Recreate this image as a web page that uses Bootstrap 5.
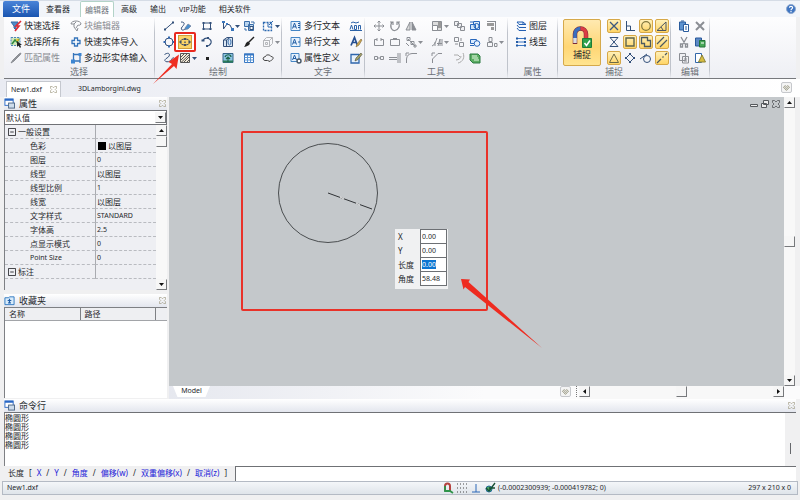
<!DOCTYPE html>
<html lang="zh-CN">
<head>
<meta charset="utf-8">
<meta name="viewport" content="width=device-width, initial-scale=1">
<title>New1.dxf</title>
<link href="https://cdn.jsdelivr.net/npm/bootstrap@5.3.0/dist/css/bootstrap.min.css" rel="stylesheet">
<style>
:root{--ink:#26282c;--mute:#8b8e94}
body{font:8px/12px "Noto Sans","Noto Sans CJK SC",sans-serif;color:var(--ink);background:#f0f0f1;overflow-x:hidden}
button,select,input{font:inherit;color:inherit;border:0;background:none;padding:0;margin:0;border-radius:0}
a{color:inherit;text-decoration:none}
svg{display:block;flex:none;fill:none;stroke:currentColor;stroke-width:1;overflow:visible}
.ic{width:12px;height:12px}
.lat{font-size:7px}
/* menu */
.menu{height:17px;background:#f2f5fa;border-top:1px solid #d5dce6;padding-left:3px}
.menu a{line-height:16px;height:16px}
.menu .file-tab{background:linear-gradient(#4a84d8,#1a55b0);color:#fff;width:36px;text-align:center;border-radius:2px 2px 0 0;font-size:9px}
.menu .view-tab{margin:0 10px 0 7px}
.menu .on-tab{width:34px;text-align:center;background:#fff;color:#70757c;border:1px solid #b3d3c8;border-bottom:0;border-radius:2px 2px 0 0;line-height:15px}
.menu-list{gap:13px;margin-left:7px}
/* ribbon */
.ribbon{background:linear-gradient(#fdfdfe,#eeeff4);border-bottom:1px solid #77797d;margin:0 4px;padding-top:1px;font-size:9px}
.grp{position:relative;border-right:1px solid;border-image:linear-gradient(transparent,#bfc3cb 25%,#bfc3cb 85%,transparent) 1}
.grp-name{text-align:center;color:#6c7077;line-height:12px}
.tools{display:grid;grid-auto-rows:16px;align-items:center;padding-left:6px}
.tools button{display:flex;align-items:center;height:14px;white-space:nowrap;line-height:14px;color:var(--ink)}
.tools .lbl{gap:2px}
.tools .sq{min-width:16px;padding-left:2px;color:#33507a}
.tools button:disabled{color:var(--mute)}
.tools .caret{width:5px;height:3px;margin-left:1px;fill:currentColor;stroke:none}
.tools .hot{width:14px;min-width:14px;margin-left:1px;padding:0;border:1px solid #d6a848;border-radius:2px;background:linear-gradient(#fff0b8,#ffd567)}
.tools .mark-box{width:22px;height:20px;margin-left:-3px;border:2px solid #e8291f;border-radius:2px;padding:1px 2px;background:#fff;position:relative}
.mark-box span{display:flex;align-items:center;justify-content:center;width:100%;height:14px;background:#fbd468;border:1px solid #cf9d39}
.g-pick{width:151px}.g-pick .tools{grid-template-columns:60px 84px}
.g-draw{width:127px}.g-draw .tools{grid-template-columns:16px 22px 21px 21px 19px 20px}
.g-text{width:83px}.g-text .tools{grid-template-columns:58px 16px;padding-left:8px}
.g-tool{width:143px}.g-tool .tools{grid-template-columns:16px 16px 26px 22px 16px 17px 24px}
.g-prop{width:50px}.g-prop .tools{padding-left:7px}
.g-snap{width:113px}.g-snap .tools{grid-template-columns:repeat(4,16px);padding-left:5px}
.g-edit{width:39px}.g-edit .tools{grid-template-columns:16px 16px;padding-left:5px}
.snap-btn{width:40px;height:47px;margin:1px 0 0 5px;border:1px solid #d5a94b;border-radius:2px;background:linear-gradient(#ffe9b0,#ffd675 60%,#ffe490);text-align:center}
.arrow-1{position:absolute;left:-2px;top:33px;width:28px;height:34px;z-index:3;pointer-events:none}
/* document tabs */
.docs{height:18px;background:linear-gradient(90deg,#e9ebf2,#f4f5f9 45%,#fff);padding-left:6px;padding-right:8px;font-size:7px}
.docs .doc-on{background:#fff;border:1px solid #c5c8cf;border-bottom:0;height:16px;width:55px;padding:0 3px 0 4px;line-height:15px}
.docs .doc{margin-left:17px;line-height:16px}
.close-x{width:7px;height:7px;color:#a09c84}
.drop{width:11px;height:11px;border:1px solid #c6c8cc;border-radius:2px;background:#f4f4f4;color:#8b8a70}
.drop svg{width:7px;height:6px}
/* side panels */
.side{width:163px;margin-left:4px}
.ttl{height:13px;background:linear-gradient(#fff,#e3e6ee);padding:0 1px 0 0;font-size:9px;line-height:13px}
.ttl svg:first-child{width:11px;height:11px;margin-right:4px}
.pick-set{height:15px;border:1px solid #707276;background:#fff}
.pick-set select{appearance:none;width:100%;line-height:13px;padding-left:1px;display:block;height:13px;outline:0}
.pick-set .sb{position:absolute;right:0;top:1px;pointer-events:none}
.sb{width:11px;height:11px;flex:none;background:#f6f6f6;border:1px solid #f6f6f6;border-right-color:#77797c;border-bottom-color:#77797c;display:flex;align-items:center;justify-content:center}
.sb svg{width:5px;height:3px;fill:#111;stroke:none}
.sb.side-way svg{width:3px;height:5px}
.track{background:#f8f8f8}
.props{height:165px;border-left:1px solid #7e8084;background:#eeeff3;overflow:hidden}
.props table{width:100%;height:154px;table-layout:fixed;border-collapse:separate;border-spacing:0}
.props td,.props th{height:14px;line-height:13px;padding:0 0 0 25px;border-bottom:1px dashed #b9bbc0;font-weight:400;text-align:left;white-space:nowrap}
.props td{border-left:1px solid #a9abb0;padding-left:1px;width:61px}
.props .sec{padding-left:3px}
.props .sec svg{width:8px;height:8px;display:inline-block;vertical-align:-1px;margin-right:2px}
.swatch{display:inline-block;width:8px;height:8px;background:#000;margin:0 2px -1px 1px}
.fav{border-left:1px solid #7e8084;border-top:1px solid #7e8084;background:#fff;margin-bottom:1px}
.fav table{width:100%;table-layout:fixed}
.fav th{height:12px;line-height:11px;padding:0 4px;font-weight:400;background:#eeeff2;border-right:1px solid #7e8084;border-bottom:1px solid #a2a4a8}
.fav th:last-child{border-right:0;width:12px}
/* drawing area */
.work{margin-left:2px}
.canvas-row{padding-right:5px}
.canvas{background:#c4c8cb}
.canvas>svg{position:absolute;left:0;top:0}
.wins{position:absolute;right:4px;top:3px;gap:3px;color:#55585c}
.wins svg{width:8px;height:8px}
.dyn{position:absolute;left:226px;top:132px;background:#f0f1f2;width:53px;height:60px}
.dyn div{height:14px}
.dyn label{width:25px;padding-left:3px;line-height:15px}
.dyn input{width:27px;height:15px;border:1px solid #6d7074;background:#fff;padding:0 1px;outline:0}
.dyn input::selection{background:#0c75d1;color:#fff}
.foot{height:13px;background:linear-gradient(90deg,#e6e8ef,#fbfbfc 50%)}
.model{width:37px;height:11px;line-height:10px;margin-left:4px;text-align:center;background:#fff;clip-path:polygon(0 0,100% 0,88% 100%,12% 100%)}
.grip{width:3px;height:11px;border-left:1px dotted #777;margin-left:5px}
.hbar{width:205px}
/* command line */
.cmd{margin:0 4px}
.log{height:54px;border-top:1px solid #6f7175;border-left:1px solid #7e8084;background:#fff;padding-top:1px;line-height:9px;font-family:"Liberation Sans","Noto Sans CJK SC",sans-serif}
.log-bar{width:11px;background:#f0f0f1;margin-top:-1px}
.log-bar i{display:block;width:1px;height:11px;margin:30px 0 0 5px;background:#66686c}
.prompt{height:15px;gap:5px;padding-left:4px;line-height:14px;white-space:pre}
.prompt a{color:#2220d8}
.prompt input{border:1px solid #6f7175;border-right:0;border-bottom:0;background:#fff;height:15px;min-width:0;margin-left:3px;outline:0}
.status{height:14px;margin:0 2px 5px 2px;border:1px solid #b4bac4;background:linear-gradient(#f4f6f9,#dfe4ea);line-height:12px;padding:0 6px 0 4px;font-size:7px}
.status .coords{margin-left:404px;gap:1px}
.status .coords svg{margin-right:1px}
</style>
<script src="https://cdn.jsdelivr.net/npm/bootstrap@5.3.0/dist/js/bootstrap.bundle.min.js"></script>
</head>
<body class="d-flex flex-column min-vh-100">
<svg class="d-none" aria-hidden="true">
  <symbol id="dn" viewBox="0 0 5 3"><path d="M0 0h5L2.500 3z"/></symbol>
  <symbol id="up" viewBox="0 0 5 3"><path d="M0 3h5L2.500 0z"/></symbol>
  <symbol id="lf" viewBox="0 0 3 5"><path d="M3 0v5L0 2.500z"/></symbol>
  <symbol id="rt" viewBox="0 0 3 5"><path d="M0 0v5L3 2.500z"/></symbol>
  <symbol id="cx" viewBox="0 0 8 8"><path d="M.5.5h2L4 2 5.500.5h2v2L6 4l1.500 1.500v2h-2L4 6 2.500 7.500h-2v-2L2 4 .5 2.500z" stroke-width=".8"/></symbol>
  <symbol id="win" viewBox="0 0 12 12"><rect x="1" y="1" width="9" height="7" fill="#fff" stroke="#2867c5"/><path d="M1 2h9" stroke="#2867c5" stroke-width="2"/><rect x="5" y="5.500" width="6.500" height="5.500" fill="#cddcec" stroke="#4b6582"/></symbol>
  <symbol id="heart" viewBox="0 0 8 7"><path d="M.5 2.500 2.500.8 4 2 5.500.8l2 1.700L4 6.300z"/><path d="M2.500 2.800 4 4l1.500-1.200"/></symbol>
  <symbol id="minus" viewBox="0 0 9 9"><path d="M.5.5h8v8h-8zM2.500 4.500h4"/></symbol>
</svg>

<nav class="menu d-flex" aria-label="菜单">
  <a class="file-tab" href="#">文件</a>
  <a class="view-tab" href="#">查看器</a>
  <a class="on-tab" href="#">编辑器</a>
  <div class="menu-list d-flex"><a href="#">高级</a><a href="#">输出</a><a href="#"><span class="lat">VIP</span>功能</a><a href="#">相关软件</a></div>
  <button class="ms-auto me-1 d-flex align-items-center" aria-label="帮助"><svg width="10" height="10" viewBox="0 0 10 10"><circle cx="5" cy="5" r="4.500" fill="#3f75c2" stroke="#8fa9cf"/><path d="M3.400 3.800c.1-2 3.300-1.800 3.200 0C6.500 5 5 4.800 5 6.200M5 7v1.200" stroke="#fff" stroke-width="1.200"/></svg></button>
</nav>

<div class="ribbon d-flex">
  <section class="grp g-pick">
    <div class="tools">
      <button class="lbl"><svg class="ic" viewBox="0 0 12 12"><path d="M1 2h7L6 6v4L4 8V6z" fill="#4e8cc8" stroke="#346aa4"/><path d="M11 1 6 6h3l-4 5" stroke="#dd2b35" stroke-width="1.600"/></svg>快速选择</button>
      <button class="lbl" disabled><svg class="ic" viewBox="0 0 12 12"><path d="M1 4c0-4 10-4 10 0-1 2-3 1-3 1L6 8M1 4h3l2-2M4 4v3l3 4 1-3"/></svg>块编辑器</button>
      <button class="lbl"><svg class="ic" viewBox="0 0 12 12"><rect x="1" y="1.500" width="9" height="8" fill="#cfe6b8" stroke="#4c83b9" stroke-dasharray="2 1"/><path d="M2 8l3-4 2 2 2-3" stroke="#2f8a3e" stroke-width="1.500"/><path d="M7 5v6l1.500-1.500L10 12l1-1-1-2h2z" fill="#222" stroke="none"/><circle cx="7.500" cy="4" r="1.300" fill="#e6b92c" stroke="none"/></svg>选择所有</button>
      <button class="lbl"><svg class="ic" viewBox="0 0 12 12"><path d="M4.500 2h3v2.500H10v3H7.500V10h-3V7.500H2v-3h2.500z" stroke="#3474bb" stroke-width="1.300" fill="#fff"/></svg>快速实体导入</button>
      <button class="lbl" disabled><svg class="ic" viewBox="0 0 12 12"><path d="M1 11l2-3 6-6 2-1-1 2-6 6z" fill="#92959a"/></svg>匹配属性</button>
      <button class="lbl"><svg class="ic" viewBox="0 0 12 12"><path d="M3.500 1v9M1 9h9M3 2.500h7.500M10 1v10" stroke="#3474bb" stroke-width="1.300"/><path d="M1 7.500h4v4H1zM8.500 1h3v3h-3z" fill="#3d86d2" stroke="none"/></svg>多边形实体输入</button>
    </div>
    <div class="grp-name">选择</div>
  </section>

  <section class="grp g-draw">
    <div class="tools">
      <button class="sq" aria-label="直线"><svg class="ic" viewBox="0 0 12 12"><path d="m2 9.500 8-7"/><path d="M1 8.500h2v2H1zM9 1.500h2v2H9z" fill="#33507a" stroke="none"/></svg></button>
      <button class="sq" aria-label="手绘"><svg class="ic" viewBox="0 0 12 12"><path d="M2 2c5 0 3 3 1 5-2 3 1 4 3 2" stroke="#34507a"/><path d="m6 8 3-4 3 2-3 3-3 .5z" fill="#4a90d0" stroke="#6e7e99" stroke-width=".7"/></svg></button>
      <button class="sq" aria-label="矩形"><svg class="ic" viewBox="0 0 12 12"><path d="M2.500 3h7v6h-7z"/><path d="M1.500 2h2v2h-2zM8.500 2h2v2h-2zM1.500 8h2v2h-2zM8.500 8h2v2h-2z" fill="#33507a" stroke="none"/></svg></button>
      <button class="sq" aria-label="折线"><svg class="ic" viewBox="0 0 12 12"><path d="M1.500 2v7L5 4l3 1 2 4"/><path d="M0 1h3v2H0zM4 3h2v2H4zM9 8h3v3H9z" fill="#3975bb" stroke="none"/></svg><svg class="caret"><use href="#dn"/></svg></button>
      <button class="sq" aria-label="插入块"><svg class="ic" viewBox="0 0 12 12"><path d="M1.500 1.500h5v5h-5zM5.500 4.500h5v6h-5z" fill="#b9d4ee" stroke="#3b6ea9"/><path d="M8 2h3v2M2 8v2h2" stroke="#3b6ea9"/><path d="M7 6.500h3v3H7z" fill="#fff"/></svg></button>
      <button class="sq" aria-label="区域"><svg class="ic" viewBox="0 0 12 12"><path d="M1.500 2.500h8v8h-8z" stroke="#2c69b0" stroke-width="1.300" stroke-dasharray="2 1"/><path d="m11 1-4 4M6 3v4h4" stroke="#2c69b0"/></svg><svg class="caret"><use href="#dn"/></svg></button>

      <button class="sq" aria-label="圆"><svg class="ic" viewBox="0 0 12 12"><circle cx="6" cy="6" r="4"/><path d="M5 .5h2v2H5zM5 9.500h2v2H5zM.5 5h2v2h-2zM9.500 5h2v2h-2z" fill="#2f65ae" stroke="none"/></svg></button>
      <button class="mark-box" aria-label="椭圆形"><span><svg width="12" height="10" viewBox="0 0 12 10"><ellipse cx="6" cy="5" rx="4.500" ry="3" stroke="#445063"/><path d="M5 1h2v2H5zM5 7h2v2H5zM.5 4h2v2h-2zM9.500 4h2v2h-2zM5.300 4.500h1.400v1.400H5.300z" fill="#445063" stroke="none"/></svg></span></button>
      <button class="sq" aria-label="圆弧"><svg class="ic" viewBox="0 0 12 12"><path d="M2 4c3-4 9-1 8 3-1 2-2 3-4 3" stroke-width="1.200"/><path d="M.5 3.500h3v2h-3zM5 9h2v2H5zM6 1h2v2H6z" fill="#33507a" stroke="none"/></svg></button>
      <button class="sq" aria-label="圆柱"><svg class="ic" viewBox="0 0 12 12"><path d="M1.500 4 5 1.500h5.500v9H1.500z" fill="#dbe7f3"/><path d="M4.500 4v6.500M1.500 4h3L7 2"/><ellipse cx="7.500" cy="6" rx="1.500" ry="3" stroke="#3970ae"/></svg></button>
      <button class="sq" aria-label="画笔"><svg class="ic" viewBox="0 0 12 12"><path d="m11 1-6 6" stroke="#222" stroke-width="1.500"/><path d="M5 5.500 7 7.500C6 10 4 10 1 11c2-2 1-4 4-5.500z" fill="#222" stroke="none"/></svg></button>
      <button class="sq" disabled aria-label="三维"><svg class="ic" viewBox="0 0 12 12"><path d="M1.500 4.500h6v6h-6zM1.500 4.500l3-3h6v6l-3 3M7.500 4.500l3-3M3.500 6.500h2v2h-2z" stroke="#b4b6ba"/></svg><svg class="caret"><use href="#dn"/></svg></button>

      <button class="sq" aria-label="样条"><svg class="ic" viewBox="0 0 12 12"><path d="M1.500 2.500C7-1 8 4 4 6c-5 3 0 5 3 3 2-1 2-4 4-3"/></svg></button>
      <button class="sq" aria-label="填充"><svg class="ic" viewBox="0 0 12 12"><path d="M1.500 1.500h9v9h-9z" fill="#f3ead8" stroke="#555"/><path d="m2 5 3-3M2 8l6-6M2 10.500 10 3M5 10l5-5M8 10l2-2" stroke="#444" stroke-width=".9"/></svg><svg class="caret"><use href="#dn"/></svg></button>
      <button class="sq" aria-label="点"><svg class="ic" viewBox="0 0 12 12"><path d="M5 5h3v3H5z" fill="#222" stroke="none"/></svg></button>
      <button class="sq" aria-label="图像"><svg class="ic" viewBox="0 0 12 12"><path d="M1 1.500h10v9H1z" fill="#8ec4e4" stroke="#356488"/><path d="M1 8.500h10v2H1z" fill="#2b7c59" stroke="none"/><path d="M6 10V5M3 5c1-3 6-3 6 0M4 7l2-2 2 2" stroke="#1d664b" stroke-width="1.200"/></svg></button>
      <button class="sq" aria-label="表格"><svg class="ic" viewBox="0 0 12 12"><path d="M1.500 2h9v8.500h-9z" fill="#fff" stroke="#3777c3"/><path d="M1 2.500h10" stroke="#3777c3" stroke-width="2"/><path d="M1.500 5.500h9M1.500 8h9M4.500 3v7.500M7.500 3v7.500" stroke="#5d97d5"/></svg></button>
      <button class="sq" aria-label="云线"><svg class="ic" viewBox="0 0 12 12"><path d="M3 8.500C0 8 1 4.500 3 5c1-3 5-2.500 6-.5 3 0 2.500 3 .5 3.500L8 9.500 5.500 8.500z" stroke="#444"/></svg></button>
    </div>
    <div class="grp-name">绘制</div>
    <svg class="arrow-1" viewBox="0 0 28 34"><path d="M0 33 19 13 15.500 11 26 3.500 23.500 18 21 15z" fill="#ee2e22" stroke="none"/></svg>
  </section>

  <section class="grp g-text">
    <div class="tools">
      <button class="lbl"><svg class="ic" viewBox="0 0 12 12"><path d="M1 1.500h9v9H1z" fill="#e8f2fc" stroke="#4586c5"/><path d="m2.500 8.500 2-5.500 2 5.500M3 6.800h3M8 3.500h2M8 5.500h2M8 7.500h2" stroke="#235ea5"/></svg>多行文本</button>
      <button class="sq" aria-label="查找文本"><svg class="ic" viewBox="0 0 12 12"><path d="M0 9.500 1.500 5 3 9.500M4.500 9.500v-4h2v4zM8.500 9.500v-4h2v4M0 10.500h12M1 3l2-1 3 1 3-1" stroke="#2b62a8"/></svg></button>
      <button class="lbl"><svg class="ic" viewBox="0 0 12 12"><path d="M1 1.500h9v9H1z" fill="#e8f2fc" stroke="#4586c5"/><path d="m2.500 8.500 2-5.500 2 5.500M3 6.800h3M8 6h2" stroke="#235ea5"/></svg>单行文本</button>
      <button class="sq" aria-label="文本样式"><svg class="ic" viewBox="0 0 12 12"><path d="m1 9.500 3.500-8 3 8M2.500 6.500h4" stroke="#264f91" stroke-width="1.700"/><path d="m11 3-4 5-1 3 3-2 3-5z" fill="#d0a84e" stroke="#7c663a" stroke-width=".6"/></svg></button>
      <button class="lbl"><svg class="ic" viewBox="0 0 12 12"><path d="M1 1.500h8v8H1z" fill="#e8f2fc" stroke="#4586c5"/><path d="m2.500 8 2-5 2 5M3 6.500h3" stroke="#235ea5"/><circle cx="9" cy="9" r="2" fill="#fff" stroke="#456" stroke-width="1.400"/></svg>属性定义</button>
      <button class="sq" aria-label="编辑属性"><svg class="ic" viewBox="0 0 12 12"><path d="M1 2.500h8v8.500H1z" fill="#e8f2fc" stroke="#2f66ac" stroke-width="1.300"/><path d="m11 1-5 5-1 3 3-1.500 4-5z" fill="#a3a06a" stroke="#4d4b32" stroke-width=".6"/></svg></button>
    </div>
    <div class="grp-name">文字</div>
  </section>

  <section class="grp g-tool">
    <div class="tools">
      <button class="sq" disabled aria-label="移动"><svg class="ic" viewBox="0 0 12 12"><path d="M6 1v10M1 6h10M4.500 2.500 6 1l1.500 1.500M4.500 9.500 6 11l1.500-1.500M2.500 4.500 1 6l1.500 1.500M9.500 4.500 11 6 9.500 7.500"/></svg></button>
      <button class="sq" disabled aria-label="旋转"><svg class="ic" viewBox="0 0 12 12"><path d="M3 2C0 7 3 11 6 10.500S12 6 9 2M1 2h3v3M11 2H8v3" stroke-width="1.200"/></svg></button>
      <button class="sq" disabled aria-label="镜像"><svg class="ic" viewBox="0 0 12 12"><path d="M5 2v8H1z" fill="#ddd"/><path d="M7 2v8h4z" fill="#8b8e94"/></svg></button>
      <button class="sq" disabled aria-label="缩放"><svg class="ic" viewBox="0 0 12 12"><path d="M1.500 1.500h9v9h-9z" fill="#ddd"/><path d="M1.500 5.500h5v5h-5z" fill="#fff"/><path d="M7 2h3v6H7z" fill="#999" stroke="none"/></svg><svg class="caret"><use href="#dn"/></svg></button>
      <button class="sq" disabled aria-label="复制"><svg class="ic" viewBox="0 0 12 12"><path d="M1.500 1.500h4v4h-4zM4.500 3.500h4v4h-4zM7.500 6.500h4v4h-4z" fill="#f0f0f3"/></svg></button>
      <button class="sq" aria-label="组合"><svg class="ic" viewBox="0 0 12 12"><path d="M4.500 1.500h6v8h-6z" fill="#e0edf9" stroke="#2867bb"/><path d="M1.500 4.500h5v5h-5z" fill="#d0e4f8" stroke="#2867bb"/><circle cx="7.500" cy="6" r="2.500" stroke="#2867bb"/><path d="M1 2h3" stroke="#2867bb"/></svg></button>
      <button class="sq" disabled aria-label="对齐"><svg class="ic" viewBox="0 0 12 12"><path d="M1 1.500h9M9.500 1v10"/><path d="M1 3h7v3H1zM5 7h3v3H5z" fill="#999" stroke="none"/></svg></button>

      <button class="sq" disabled aria-label="打断"><svg class="ic" viewBox="0 0 12 12"><path d="M4 3.500H1.500v6h9v-6H8M4 2v3M8 2v3"/></svg></button>
      <button class="sq" disabled aria-label="闭合"><svg class="ic" viewBox="0 0 12 12"><path d="M1.500 3.500v6h9v-6zM4 2.500h4"/></svg></button>
      <button class="sq" disabled aria-label="节点"><svg class="ic" viewBox="0 0 12 12"><path d="m3 3 7 7M2 1.500h3v3H2zM6 5.500h3v3H6zM9 9h2v2H9zM1 7l3 3"/></svg><svg class="caret"><use href="#dn"/></svg></button>
      <button class="sq" disabled aria-label="标注"><svg class="ic" viewBox="0 0 12 12"><path d="M1 10c3-1 4-5 5-8M4 10V6M7 10l2-7v7M6 7.500h5M11 3v7"/></svg><svg class="caret"><use href="#dn"/></svg></button>
      <button class="sq" disabled aria-label="阵列"><svg class="ic" viewBox="0 0 12 12"><path d="M1.500 1.500h4v4h-4zM6.500 6.500h4v4h-4zM8 2v3M2 8h3"/></svg></button>
      <button class="sq" aria-label="分解"><svg class="ic" viewBox="0 0 12 12"><path d="M1.500 3.500h6v4h-6z" fill="#d9eaff" stroke="#2867bb"/><circle cx="8" cy="7.500" r="2.800" fill="#e9f3ff" stroke="#2867bb"/><path d="M1 9.500h4" stroke="#2867bb"/></svg></button>
      <button class="sq" disabled aria-label="顺序"><svg class="ic" viewBox="0 0 12 12"><path d="M3 1.500h3v4H3zM1.500 10.500v-4h5v4zM8.500 7.500h2.500v3H8.500z"/></svg><svg class="caret"><use href="#dn"/></svg></button>

      <button class="sq" disabled aria-label="合并"><svg class="ic" viewBox="0 0 12 12"><path d="M1.500 4.500h3v3h-3zM7.500 4.500h3v3h-3zM4.500 6h3"/></svg></button>
      <button class="sq" disabled aria-label="延伸"><svg class="ic" viewBox="0 0 12 12"><path d="M0 5.500h8M0 7.500h8M9 1v10M11 1v10"/></svg></button>
      <button class="sq" disabled aria-label="圆角"><svg class="ic" viewBox="0 0 12 12"><path d="M1.500 11V7Q2 2 7 1.500h5M1 4V1h3"/></svg></button>
      <button class="sq" disabled aria-label="倒角"><svg class="ic" viewBox="0 0 12 12"><path d="M1.500 11V7L7 1.500h4M1 4V1h3"/></svg></button>
      <button class="sq" disabled aria-label="偏移"><svg class="ic" viewBox="0 0 12 12"><path d="M1 3h4l2 2M10 1c2 4 0 9-5 10M8 4c0 2-2 4-5 4" stroke="#aaa"/></svg></button>
      <button class="sq" aria-label="图层组"><svg class="ic" viewBox="0 0 12 12"><path d="M1 2h8l2 2v7H4L1 8z" fill="#5cae63" stroke="#2c7b43"/><path d="M3 4h5M3 6h6M5 8h5" stroke="#e4f8e4"/></svg></button>
    </div>
    <div class="grp-name">工具</div>
  </section>

  <section class="grp g-prop">
    <div class="tools">
      <button class="lbl"><svg class="ic" viewBox="0 0 12 12"><path d="M2 2h6l3 2.500H4zM2 5l2 2.500h7M2 8l2 2.500h7M8 2v2" fill="#e9f2fb" stroke="#245fb1"/></svg>图层</button>
      <button class="lbl"><svg class="ic" viewBox="0 0 12 12"><path d="M1 2.500h10M1 6h10M1 9.500h10" stroke="#3c77c4"/><path d="M1 1.500h2v2H1zM9 1.500h2v2H9zM1 5h2v2H1zM9 5h2v2H9zM1 8.500h2v2H1zM9 8.500h2v2H9z" fill="#235aa5" stroke="none"/></svg>线型</button>
      <span></span>
    </div>
    <div class="grp-name">属性</div>
  </section>

  <section class="grp g-snap">
    <div class="d-flex">
      <button class="snap-btn"><svg class="mx-auto" width="22" height="24" viewBox="0 0 22 24"><path d="M4 19V9a5.500 5.500 0 0 1 11 0v8" stroke="#7c2834" stroke-width="4.500"/><path d="M4 15V9a5.500 5.500 0 0 1 5.500-5.500" stroke="#396fc0" stroke-width="3.500"/><path d="M9.500 3.500A5.500 5.500 0 0 1 15 9v6" stroke="#dd3b43" stroke-width="3.500"/><path d="M4 13v5" stroke="#ddd" stroke-width="3.500"/><path d="M11.500 13.500h9v9h-9z" fill="#2da14b" stroke="#207b36"/><path d="m13.500 18 2 2.500 3.500-5" stroke="#fff" stroke-width="1.600"/></svg>捕捉</button>
      <div class="tools">
        <button class="sq hot" aria-label="交点"><svg class="ic" viewBox="0 0 12 12"><path d="m2 2 8 8M10 2l-8 8" stroke="#3d5a80" stroke-width="1.300"/></svg></button>
        <button class="sq" aria-label="垂足"><svg class="ic" viewBox="0 0 12 12"><path d="M2.500 1v9.500H11M2.500 6h4v4.500"/></svg></button>
        <button class="sq hot" aria-label="圆心"><svg class="ic" viewBox="0 0 12 12"><circle cx="6" cy="6" r="4.300" stroke="#82783f" stroke-width="1.200"/></svg></button>
        <button class="sq hot" aria-label="角度"><svg class="ic" viewBox="0 0 12 12"><path d="M1 10.500 10 2v8.500z" stroke="#4c5560"/><path d="m5 7 2 3" stroke="#4c5560"/></svg></button>
        <button class="sq" aria-label="最近点"><svg class="ic" viewBox="0 0 12 12"><path d="M2 1.500h8l-8 9h8z"/></svg></button>
        <button class="sq hot" aria-label="端点"><svg class="ic" viewBox="0 0 12 12"><path d="M2 2h8v8H2z" stroke="#5f6650" stroke-width="1.400"/></svg></button>
        <button class="sq hot" aria-label="插入点"><svg class="ic" viewBox="0 0 12 12"><path d="M1.500 1.500h6v3h3v6h-6v-3h-3z" stroke="#4d5a60" stroke-width="1.300"/></svg></button>
        <button class="sq hot" aria-label="平行"><svg class="ic" viewBox="0 0 12 12"><path d="m1 8 7-7M4 11l7-7" stroke="#4d5a60" stroke-width="1.200"/></svg></button>
        <button class="sq hot" aria-label="中点"><svg class="ic" viewBox="0 0 12 12"><path d="m6 2 4.500 8.500h-9z" stroke="#6d6a46"/></svg></button>
        <button class="sq" aria-label="象限点"><svg class="ic" viewBox="0 0 12 12"><path d="m6 2 4 4-4 4-4-4z"/><path d="M5 1h2v2H5zM5 9h2v2H5zM1 5h2v2H1zM9 5h2v2H9z" fill="#33507a" stroke="none"/></svg></button>
        <button class="sq" aria-label="切点"><svg class="ic" viewBox="0 0 12 12"><circle cx="7" cy="7" r="3.500"/><path d="m0 7 7-5"/></svg></button>
        <button class="sq hot" aria-label="延长线"><svg class="ic" viewBox="0 0 12 12"><path d="m1 11 4-4M6.500 5.500l1-1M9 3l2-2" stroke="#4d5a60" stroke-width="1.200"/></svg></button>
      </div>
    </div>
    <div class="grp-name">捕捉</div>
  </section>

  <section class="grp g-edit">
    <div class="tools">
      <button class="sq" aria-label="粘贴"><svg class="ic" viewBox="0 0 12 12"><path d="M1.500 2h6v8h-6z" fill="#5d92cf" stroke="#2a5c9d"/><path d="M5.500 4.500h5v7h-5z" fill="#fff" stroke="#2a5c9d"/><path d="M3 1h3M7 7h2M7 9h2" stroke="#2a5c9d"/></svg></button>
      <button class="sq" disabled aria-label="删除"><svg class="ic" viewBox="0 0 12 12"><path d="m2 2 8 8M10 2l-8 8" stroke-width="2"/></svg></button>
      <button class="sq" disabled aria-label="剪切"><svg class="ic" viewBox="0 0 12 12"><path d="m3 1 4 7M9 1 5 8M2.500 8h2v3h-2zM7.500 8h2v3h-2z" stroke-width="1.300"/></svg></button>
      <button class="sq" aria-label="粘贴块"><svg class="ic" viewBox="0 0 12 12"><path d="M1.500 2h6v8h-6z" fill="#5c89c4" stroke="#29599b"/><path d="M5.500 4.500h5.500v6.500H5.500z" fill="#49a858" stroke="#227239"/><path d="M7 7h3" stroke="#fff"/></svg></button>
      <button class="sq" disabled aria-label="复制"><svg class="ic" viewBox="0 0 12 12"><path d="M1.500 1.500h6v7h-6zM4.500 4.500h6v6.500h-6zM6 7h3M6 9h3" fill="#f0f0f3"/></svg></button>
      <button class="sq" aria-label="选择性粘贴"><svg class="ic" viewBox="0 0 12 12"><path d="M1.500 1.500h6v9h-6z" fill="#fff" stroke="#3267a9"/><path d="m8 3 3.500 7h-7z" fill="#d7bd40" stroke="#8d8334"/></svg></button>
    </div>
    <div class="grp-name">编辑</div>
  </section>
</div>

<div class="docs d-flex align-items-end">
  <a class="doc-on d-flex align-items-center justify-content-between" href="#">New1.dxf<svg class="close-x"><use href="#cx"/></svg></a>
  <a class="doc" href="#">3DLamborgini.dwg</a>
  <button class="drop ms-auto mb-1 d-flex align-items-center justify-content-center" aria-label="文档列表"><svg><use href="#heart"/></svg></button>
</div>

<main class="d-flex flex-grow-1">
  <aside class="side d-flex flex-column flex-shrink-0">
    <div class="ttl d-flex align-items-center"><svg><use href="#win"/></svg>属性<svg class="close-x ms-auto"><use href="#cx"/></svg></div>
    <div class="pick-set position-relative">
      <select aria-label="对象"><option>默认值</option></select>
      <span class="sb"><svg><use href="#dn"/></svg></span>
    </div>
    <div class="props d-flex">
      <table>
        <tr><th class="sec"><svg><use href="#minus"/></svg>一般设置</th><td></td></tr>
        <tr><th>色彩</th><td><span class="swatch"></span>以图层</td></tr>
        <tr><th>图层</th><td class="lat">0</td></tr>
        <tr><th>线型</th><td>以图层</td></tr>
        <tr><th>线型比例</th><td class="lat">1</td></tr>
        <tr><th>线宽</th><td>以图层</td></tr>
        <tr><th>文字样式</th><td class="lat">STANDARD</td></tr>
        <tr><th>字体高</th><td class="lat">2.5</td></tr>
        <tr><th>点显示模式</th><td class="lat">0</td></tr>
        <tr><th class="lat">Point Size</th><td class="lat">0</td></tr>
        <tr><th class="sec"><svg><use href="#minus"/></svg>标注</th><td></td></tr>
      </table>
      <div class="track d-flex flex-column">
        <span class="sb"><svg><use href="#up"/></svg></span><span class="sb"></span><span class="sb mt-auto"><svg><use href="#dn"/></svg></span>
      </div>
    </div>
    <div class="ttl d-flex align-items-center mt-1"><svg viewBox="0 0 12 12"><path d="M1 3h4l1-1h5v8.500H1z" fill="#d8ebfa" stroke="#2c76bf"/><path d="M6 4v5M4 6h4M4.500 8.500h3" stroke="#1f5da8" stroke-width="1.300"/></svg>收藏夹<svg class="close-x ms-auto"><use href="#cx"/></svg></div>
    <div class="fav flex-grow-1"><table><tr><th>名称</th><th>路径</th><th></th></tr></table></div>
  </aside>

  <div class="work d-flex flex-column flex-grow-1">
    <div class="canvas-row d-flex flex-grow-1">
      <div class="canvas position-relative flex-grow-1 overflow-hidden">
        <svg width="380" height="260" viewBox="-2 0 380 260">
          <circle cx="157" cy="96" r="49.500" stroke="#3c3f42" stroke-width=".9"/>
          <path d="m157 96 44 16" stroke="#303336"/>
          <path d="m169 100 4 2M185 106l4 2" stroke="#f4f4f4"/>
          <rect x="71" y="35" width="245" height="178" rx="1" stroke="#e93229" stroke-width="2"/>
          <path d="m290 182 9 .5-1.500 2.500L371 251 294 190l-1.500 2.500z" fill="#ee2b20" stroke="none"/>
        </svg>
        <div class="wins d-flex">
          <svg viewBox="0 0 8 8"><path d="M.5 4.500h7v2h-7z" fill="#eee"/></svg>
          <svg viewBox="0 0 8 8"><path d="M2.500.5h5v4h-5zM.5 3.500h5v4h-5z" fill="#eee"/></svg>
          <svg><use href="#cx"/></svg>
        </div>
        <form class="dyn">
          <div class="d-flex"><label for="fx">X</label><input class="lat" id="fx" value="0.00"></div>
          <div class="d-flex"><label for="fy">Y</label><input class="lat" id="fy" value="0.00"></div>
          <div class="d-flex"><label for="fl">长度</label><input class="lat" id="fl" value="0.00"></div>
          <div class="d-flex"><label for="fa">角度</label><input class="lat" id="fa" value="58.48"></div>
        </form>
      </div>
      <div class="track d-flex flex-column justify-content-between">
        <span class="sb"><svg><use href="#up"/></svg></span><span class="sb"></span><span class="sb"><svg><use href="#dn"/></svg></span>
      </div>
    </div>
    <div class="foot d-flex">
      <a class="model lat" href="#">Model</a>
      <button class="drop ms-auto d-flex align-items-center justify-content-center" aria-label="布局列表"><svg><use href="#heart"/></svg></button>
      <span class="grip"></span>
      <div class="hbar track d-flex justify-content-between me-3">
        <span class="sb side-way"><svg><use href="#lf"/></svg></span><span class="sb"></span><span class="sb side-way"><svg><use href="#rt"/></svg></span>
      </div>
    </div>
  </div>
</main>

<section class="cmd">
  <div class="ttl d-flex align-items-center"><svg><use href="#win"/></svg>命令行<svg class="close-x ms-auto"><use href="#cx"/></svg></div>
  <div class="log d-flex">
    <div class="flex-grow-1"><div>椭圆形</div><div>椭圆形</div><div>椭圆形</div><div>椭圆形</div></div>
    <div class="log-bar"><i></i></div>
  </div>
  <div class="prompt d-flex">
    <label for="cmd">长度</label><span>[</span><a href="#">X</a><span>/</span><a href="#">Y</a><span>/</span><a href="#">角度</a><span>/</span><a href="#">偏移(w)</a><span>/</span><a href="#">双重偏移(x)</a><span>/</span><a href="#">取消(z)</a><span>]</span>
    <input id="cmd" class="flex-grow-1">
  </div>
</section>

<footer class="status d-flex align-items-center">
  <span>New1.dxf</span>
  <div class="coords d-flex align-items-center">
    <svg class="ic" viewBox="0 0 12 12"><path d="M3 9V4a2.500 2.500 0 0 1 5 0v5" stroke="#b4433f" stroke-width="2"/><path d="M3 4v5h5l3 2" stroke="#2e944a" stroke-width="1.800"/></svg>
    <svg class="ic" viewBox="0 0 12 12"><path d="M1 2h10M1 6h10M1 10h10" stroke="#444" stroke-dasharray="1 2"/></svg>
    <svg class="ic" viewBox="0 0 12 12"><path d="M6 2v8M2 10h8" stroke="#2c69b8"/></svg>
    <svg class="ic" viewBox="0 0 12 12"><circle cx="5" cy="7" r="3" fill="#49a563" stroke="#246a9b"/><path d="m2 6 3 3 6-8M5 6h6" stroke="#164f33" stroke-width="1.300"/></svg>
    <span>(-0.0002300939; -0.000419782; 0)</span>
  </div>
  <span class="ms-auto">297 x 210 x 0</span>
</footer>
<script>
  // the length field starts active, with its value selected
  const len = document.getElementById('fl');
  len.focus({preventScroll: true});
  len.select();
</script>
</body>
</html>
